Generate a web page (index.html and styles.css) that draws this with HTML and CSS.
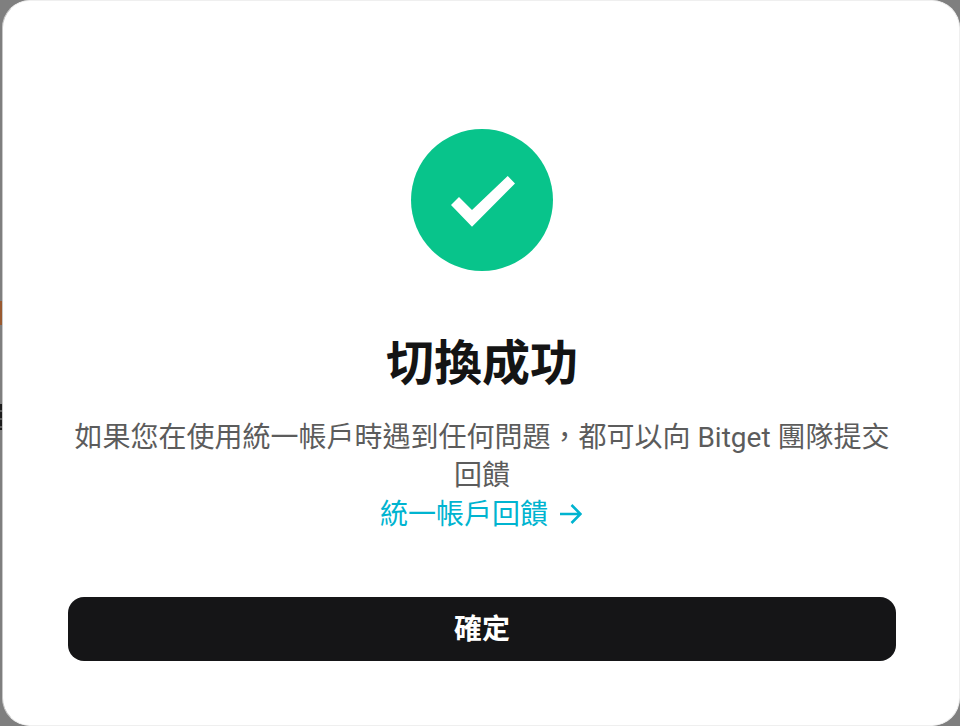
FILE: index.html
```html
<!DOCTYPE html>
<html lang="zh-Hant">
<head>
  <meta charset="UTF-8" />
  <meta name="viewport" content="width=device-width, initial-scale=1.0" />
  <title>切換成功</title>
  <link rel="stylesheet" href="styles.css">
</head>
<body>
  <!-- page peeking out behind the dialog -->
  <div class="backdrop">
    <span class="peek-orange"></span>
    <span class="peek-dark"></span>
  </div>
  <div class="modal">
    <svg class="check-icon" viewBox="0 0 142 142" aria-hidden="true">
      <circle cx="71" cy="71" r="71" fill="#08c48b"/>
      <polygon points="96.7,47 104,54.5 61,97.7 40,76 48,68 61,81" fill="#fff"/>
    </svg>
    <h1>切換成功</h1>
    <p class="desc">如果您在使用統一帳戶時遇到任何問題，都可以向 Bitget 團隊提交回饋</p>
    <a class="feedback" href="#">統一帳戶回饋
      <svg class="arrow" viewBox="0 0 22 24" aria-hidden="true">
        <path d="M0 12 H20 M11.5 3 L20.5 12 L11.5 21" fill="none" stroke="#00b4d0" stroke-width="2.6"/>
      </svg>
    </a>
    <button class="confirm">確定</button>
  </div>
</body>
</html>
```

FILE: styles.css
```css
html, body {
  margin: 0;
  padding: 0;
  height: 100%;
}
body {
  background: #7f7f7f;
  font-family: "Roboto", "Noto Sans CJK TC", sans-serif;
  overflow: hidden;
  display: flex;
  padding-left: 2px;
  box-sizing: border-box;
  height: 726px;
}
.backdrop {
  position: absolute;
  top: 0;
  left: 0;
  width: 3px;
  height: 726px;
}
.peek-orange {
  position: absolute;
  top: 301px;
  left: 0;
  width: 2px;
  height: 24px;
  background: #9a5a30;
}
.peek-dark {
  position: absolute;
  top: 404px;
  left: 0;
  width: 2px;
  height: 26px;
  background: repeating-linear-gradient(#1c1c1c 0 6px, #5a5a5a 6px 8px);
}
.modal {
  flex: 1;
  background: #fff;
  border: 1px solid #efefef;
  border-left-color: #c8c8c8;
  border-radius: 28px;
  display: flex;
  flex-direction: column;
  align-items: center;
  padding: 128px 63px 0 65px;
}
.check-icon {
  width: 142px;
  height: 142px;
  display: block;
}
h1 {
  margin: 58px 0 0;
  font-size: 48px;
  line-height: 70px;
  font-weight: 700;
  color: #141414;
}
.desc {
  margin: 20px 0 0;
  font-size: 28px;
  line-height: 38px;
  color: #5c5c5c;
  text-align: center;
}
.feedback {
  display: flex;
  align-items: center;
  gap: 12px;
  margin-right: 2px;
  font-size: 28px;
  line-height: 40px;
  color: #00b4d0;
  text-decoration: none;
}
.arrow {
  width: 22px;
  height: 24px;
  margin-top: -2px;
}
.confirm {
  margin-top: 62px;
  width: 100%;
  height: 64px;
  border: none;
  border-radius: 16px;
  background: #151517;
  color: #fff;
  font-family: inherit;
  font-size: 28px;
  font-weight: 700;
  padding: 0 0 5px;
}
```
